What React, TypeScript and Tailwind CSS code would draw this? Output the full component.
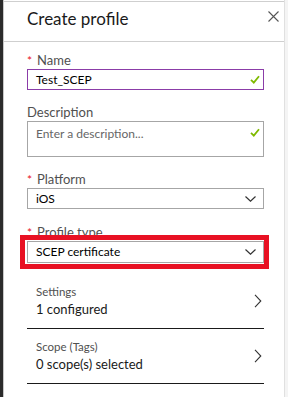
import React from "react";

const font = { fontFamily: '"Segoe UI", Lato, "Open Sans", sans-serif' };

function Check() {
  return (
    <svg width="10" height="9" viewBox="0 0 10 9" className="absolute right-[3px]">
      <path d="M1 4.8 L3.8 7.6 L9 1.2" fill="none" stroke="#7fba00" strokeWidth="1.8" />
    </svg>
  );
}

function Chevron() {
  return (
    <svg width="11" height="6" viewBox="0 0 11 6" className="absolute right-[7px] top-1/2 -translate-y-1/2">
      <path d="M0.5 0.5 L5.5 5.2 L10.5 0.5" fill="none" stroke="#333" strokeWidth="1.2" />
    </svg>
  );
}

function RightChevron() {
  return (
    <svg width="8" height="14" viewBox="0 0 8 14">
      <path d="M1 0.8 L6.8 7 L1 13.2" fill="none" stroke="#333" strokeWidth="1.1" />
    </svg>
  );
}

function Label({ text, required }: { text: string; required?: boolean }) {
  return (
    <div className="flex items-center h-[18px] text-[13px] text-[#505050] leading-[18px]">
      {required && <span className="text-[#e81123] text-[12px] w-[10px] leading-[18px] mt-[1px]">*</span>}
      <span>{text}</span>
    </div>
  );
}

export default function App() {
  return (
    <div className="w-[288px] h-[397px] flex bg-white overflow-hidden" style={font}>
      <div className="w-[3px] bg-[#2b2b2b]" />
      <div className="w-[1px] bg-[#c8c8c8]" />
      <div className="flex-1 flex flex-col mt-[1px] border-t border-[#cfcfcf]">
        <div className="h-[40px] border-b border-[#cfcfcf] flex items-start justify-between pl-[23px] pr-[5px]">
          <div className="text-[17px] text-[#1a1a1a] leading-[24px] mt-[5px]">Create profile</div>
          <svg width="11" height="11" viewBox="0 0 11 11" className="mt-[9px]">
            <path d="M0.5 0.5 L10.5 10.5 M10.5 0.5 L0.5 10.5" stroke="#555" strokeWidth="1.1" />
          </svg>
        </div>
        <div className="flex flex-col pl-[23px] pr-[20px] pt-[9px]">
          <Label text="Name" required />
          <div className="relative h-[21px] border border-[#8b3ca8] flex items-center pl-[8px] text-[12px] text-black">
            <span>Test_SCEP</span>
            <Check />
          </div>
          <div className="mt-[13px]">
            <Label text="Description" />
          </div>
          <div className="relative h-[36px] border border-[#a6a6a6] flex items-start pl-[8px] pt-[3px] text-[12px] text-[#666]">
            <span>Enter a description...</span>
            <div className="absolute right-0 top-[6px]">
              <Check />
            </div>
          </div>
          <div className="mt-[13px]">
            <Label text="Platform" required />
          </div>
          <div className="relative h-[21px] border border-[#a6a6a6] flex items-center pl-[8px] text-[12px] text-black">
            <span>iOS</span>
            <Chevron />
          </div>
          <div className="mt-[14px]">
            <Label text="Profile type" required />
          </div>
          <div className="relative h-[22px] border border-[#a6a6a6] flex items-center pl-[8px] text-[12px] text-black">
            <span>SCEP certificate</span>
            <Chevron />
            <div className="absolute -left-[8px] -right-[6px] -top-[7px] -bottom-[7px] border-[5px] border-[#e81123]" />
          </div>
          <div className="mt-[11px] flex flex-col">
            {[
              ["Settings", "1 configured"],
              ["Scope (Tags)", "0 scope(s) selected"],
            ].map(([a, b]) => (
              <div key={a} className="flex items-center justify-between border-b border-[#1a1a1a] pt-[10px] pb-[10px] pl-[9px] pr-[2px]">
                <div className="flex flex-col">
                  <div className="text-[11.5px] leading-[16px] text-[#505050]">{a}</div>
                  <div className="text-[13px] leading-[18px] text-[#1a1a1a]">{b}</div>
                </div>
                <RightChevron />
              </div>
            ))}
          </div>
        </div>
      </div>
      <div className="w-[1px] bg-[#e0e0e0]" />
      <div className="w-[3px] bg-[#f4f4f4]" />
    </div>
  );
}
